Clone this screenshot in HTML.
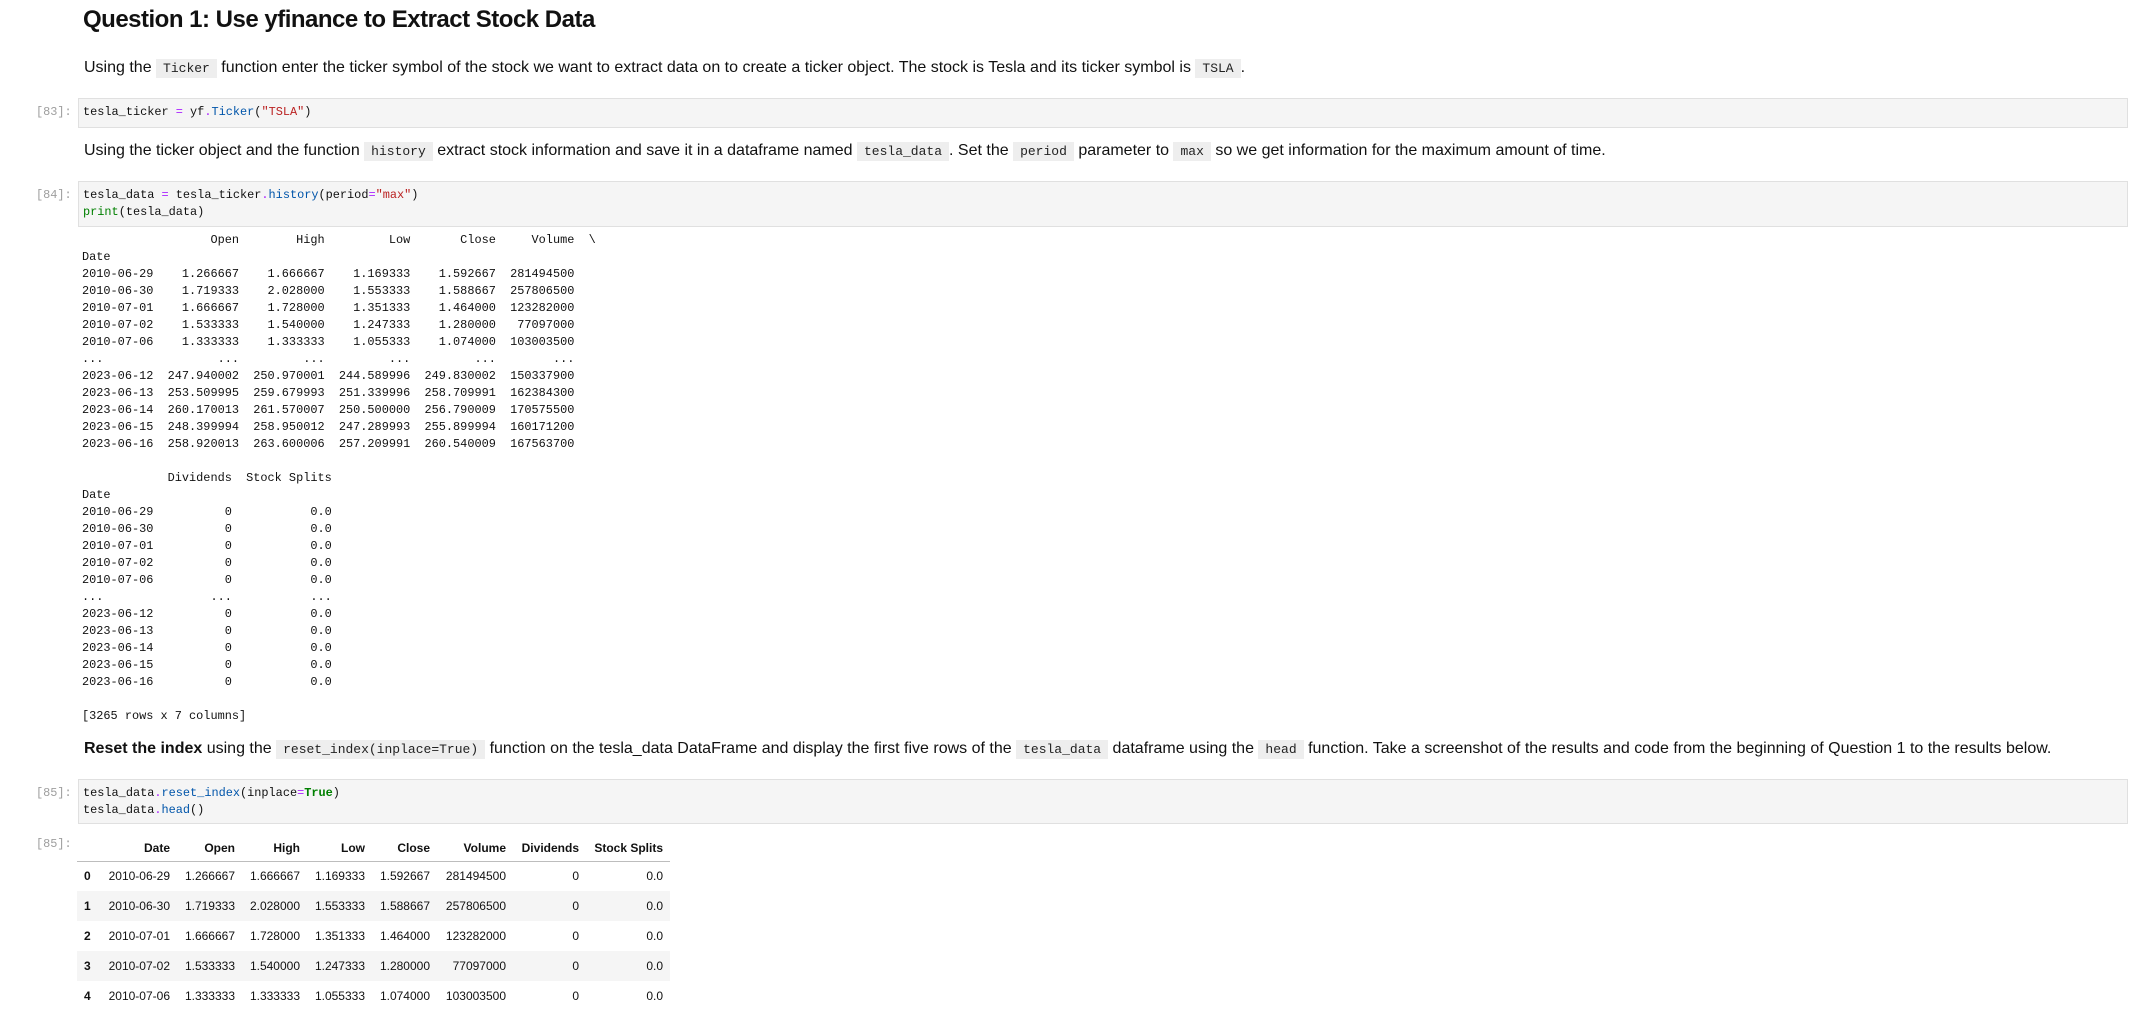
<!DOCTYPE html>
<html><head><meta charset="utf-8"><style>
*{margin:0;padding:0;box-sizing:border-box}
body{width:2130px;height:1029px;background:#fff;position:relative;overflow:hidden;font-family:"Liberation Sans",sans-serif;color:#111}
h1{position:absolute;left:83px;top:6px;font-size:24px;font-weight:bold;letter-spacing:-0.5px;color:#111;white-space:nowrap}
.p{position:absolute;left:84px;font-size:16px;white-space:nowrap;line-height:22px;color:#111}
code{font-family:"Liberation Mono",monospace;font-size:13px;background:#eee;padding:2px 7px;color:#222}
.cell{position:absolute;left:78px;width:2050px;background:#f5f5f5;border:1px solid #e0e0e0}
.code{position:absolute;left:83px;font-family:"Liberation Mono",monospace;font-size:11.9px;line-height:17px;white-space:pre;color:#111}
.pr{position:absolute;left:36px;font-family:"Liberation Mono",monospace;font-size:11.9px;color:#9e9e9e;line-height:17px}
.op{color:#aa22ff}.fn{color:#0055aa}.st{color:#ba2121}.bi{color:#008000}.kw{color:#008000;font-weight:bold}
pre.out{position:absolute;left:82px;font-family:"Liberation Mono",monospace;font-size:11.9px;line-height:17px;color:#111}
table{position:absolute;left:77px;top:835px;border-collapse:collapse;font-size:12px;color:#111}
td,th{height:30px;text-align:right;padding:0;white-space:nowrap}
thead th{height:26px;border-bottom:1px solid #bdbdbd;font-weight:bold}
tbody tr:nth-child(even){background:#f5f5f5}
td.i,th.i{text-align:left;padding-left:7px;font-weight:bold}
</style></head><body>
<h1>Question 1: Use yfinance to Extract Stock Data</h1>
<div class="p" style="top:57px">Using the <code>Ticker</code> function enter the ticker symbol of the stock we want to extract data on to create a ticker object. The stock is Tesla and its ticker symbol is <code>TSLA</code>.</div>

<div class="cell" style="top:98px;height:30px"></div>
<div class="pr" style="top:104px">[83]:</div>
<div class="code" style="top:104px">tesla_ticker <span class="op">=</span> yf<span class="op">.</span><span class="fn">Ticker</span>(<span class="st">"TSLA"</span>)</div>

<div class="p" style="top:140px">Using the ticker object and the function <code>history</code> extract stock information and save it in a dataframe named <code>tesla_data</code>. Set the <code>period</code> parameter to <code>max</code> so we get information for the maximum amount of time.</div>

<div class="cell" style="top:181px;height:46px"></div>
<div class="pr" style="top:187px">[84]:</div>
<div class="code" style="top:187px">tesla_data <span class="op">=</span> tesla_ticker<span class="op">.</span><span class="fn">history</span>(period<span class="op">=</span><span class="st">"max"</span>)
<span class="bi">print</span>(tesla_data)</div>

<pre class="out" style="top:232px">                  Open        High         Low       Close     Volume  \
Date                                                                    
2010-06-29    1.266667    1.666667    1.169333    1.592667  281494500   
2010-06-30    1.719333    2.028000    1.553333    1.588667  257806500   
2010-07-01    1.666667    1.728000    1.351333    1.464000  123282000   
2010-07-02    1.533333    1.540000    1.247333    1.280000   77097000   
2010-07-06    1.333333    1.333333    1.055333    1.074000  103003500   
...                ...         ...         ...         ...        ...   
2023-06-12  247.940002  250.970001  244.589996  249.830002  150337900   
2023-06-13  253.509995  259.679993  251.339996  258.709991  162384300   
2023-06-14  260.170013  261.570007  250.500000  256.790009  170575500   
2023-06-15  248.399994  258.950012  247.289993  255.899994  160171200   
2023-06-16  258.920013  263.600006  257.209991  260.540009  167563700   

            Dividends  Stock Splits  
Date                                 
2010-06-29          0           0.0  
2010-06-30          0           0.0  
2010-07-01          0           0.0  
2010-07-02          0           0.0  
2010-07-06          0           0.0  
...               ...           ...  
2023-06-12          0           0.0  
2023-06-13          0           0.0  
2023-06-14          0           0.0  
2023-06-15          0           0.0  
2023-06-16          0           0.0  

[3265 rows x 7 columns]</pre>

<div class="p" style="top:738px"><b>Reset the index</b> using the <code>reset_index(inplace=True)</code> function on the tesla_data DataFrame and display the first five rows of the <code>tesla_data</code> dataframe using the <code>head</code> function. Take a screenshot of the results and code from the beginning of Question 1 to the results below.</div>

<div class="cell" style="top:779px;height:45px"></div>
<div class="pr" style="top:785px">[85]:</div>
<div class="code" style="top:785px">tesla_data<span class="op">.</span><span class="fn">reset_index</span>(inplace<span class="op">=</span><span class="kw">True</span>)
tesla_data<span class="op">.</span><span class="fn">head</span>()</div>
<div class="pr" style="top:836px">[85]:</div>

<table>
<colgroup><col style="width:20px"><col style="width:73px"><col style="width:65px"><col style="width:65px"><col style="width:65px"><col style="width:65px"><col style="width:76px"><col style="width:73px"><col style="width:84px"><col style="width:7px"></colgroup>
<thead><tr><th class="i"></th><th>Date</th><th>Open</th><th>High</th><th>Low</th><th>Close</th><th>Volume</th><th>Dividends</th><th>Stock Splits</th><th></th></tr></thead>
<tbody>
<tr><td class="i">0</td><td>2010-06-29</td><td>1.266667</td><td>1.666667</td><td>1.169333</td><td>1.592667</td><td>281494500</td><td>0</td><td>0.0</td><td></td></tr>
<tr><td class="i">1</td><td>2010-06-30</td><td>1.719333</td><td>2.028000</td><td>1.553333</td><td>1.588667</td><td>257806500</td><td>0</td><td>0.0</td><td></td></tr>
<tr><td class="i">2</td><td>2010-07-01</td><td>1.666667</td><td>1.728000</td><td>1.351333</td><td>1.464000</td><td>123282000</td><td>0</td><td>0.0</td><td></td></tr>
<tr><td class="i">3</td><td>2010-07-02</td><td>1.533333</td><td>1.540000</td><td>1.247333</td><td>1.280000</td><td>77097000</td><td>0</td><td>0.0</td><td></td></tr>
<tr><td class="i">4</td><td>2010-07-06</td><td>1.333333</td><td>1.333333</td><td>1.055333</td><td>1.074000</td><td>103003500</td><td>0</td><td>0.0</td><td></td></tr>
</tbody></table>
</body></html>
